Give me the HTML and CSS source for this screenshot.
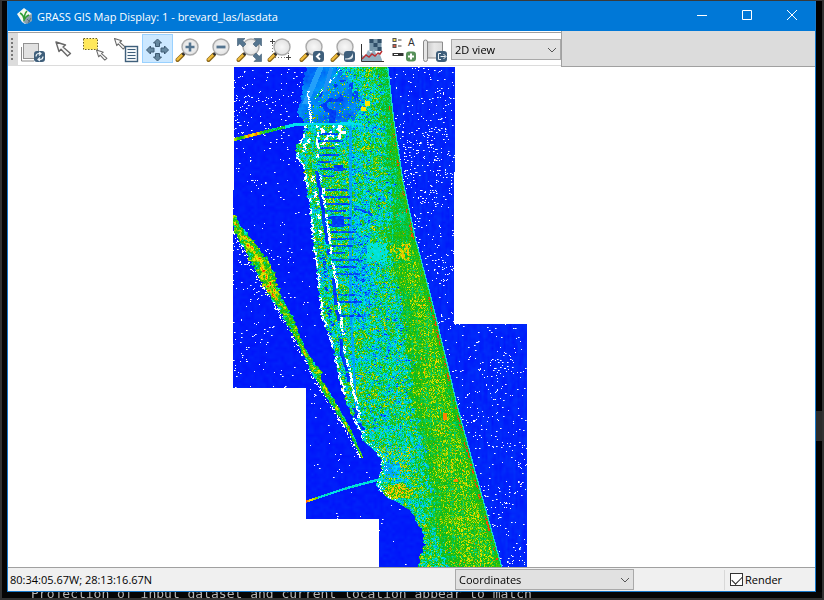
FILE: index.html
```html
<!DOCTYPE html>
<html lang="en">
<head>
<meta charset="utf-8">
<title>GRASS GIS Map Display</title>
<link rel="stylesheet" href="styles.css">
</head>
<body>
<svg class="defs" aria-hidden="true">
  <defs>
    <radialGradient id="glass"><stop offset="0" stop-color="#f8f8f8"/><stop offset="1" stop-color="#e2e2e2"/></radialGradient>
    <linearGradient id="paper"><stop offset="0" stop-color="#c4c4c4"/><stop offset=".5" stop-color="#e8e8e8"/><stop offset="1" stop-color="#dcdcdc"/></linearGradient>
    <g id="lens">
      <path d="M4.500 25 L10 19.500" stroke="#8a6518" stroke-width="4" stroke-linecap="round"/>
      <path d="M4.500 24.500 L10 19" stroke="#f0bd3c" stroke-width="2.400" stroke-linecap="round"/>
      <path d="M9.500 20 L12.500 17" stroke="#333" stroke-width="3"/>
      <circle cx="17" cy="12" r="8" fill="url(#glass)" stroke="#aaa" stroke-width="1.400"/>
    </g>
    <rect id="badge" x="16" y="16" width="11" height="11" rx="3" fill="#3f5f7b"/>
    <path id="pointer" d="M0 0 L9.500 3 L7 5 L14.500 11.500 L11.500 14 L5 7.200 L3 9.500 Z" fill="#fafafa" stroke="#686868" stroke-width="1.400" stroke-linejoin="round"/>
  </defs>
</svg>
<main class="window">
  <header class="titlebar">
    <svg class="logo" width="18" height="18" viewBox="0 0 18 18" aria-hidden="true">
      <path d="M1 7 L8 1 L16 7 L15 13 L9 17 L6 15 Z" fill="#f4f8ef"/>
      <path d="M10 9 L16 7 L16 14 L11 17 L7 15 Z" fill="#8aa0ad"/>
      <path d="M11 12 L14 15 M12 16 L15 11" stroke="#557080"/>
      <path d="M8 14 Q8 8 4 6 M8 14 Q8 7 11 4 M8 13 Q10 9 13 8" fill="none" stroke="#2f9e35" stroke-width="1.500"/>
    </svg>
    <h1>GRASS GIS Map Display: 1 - brevard_las/lasdata</h1>
    <div class="controls">
      <button aria-label="Minimize"><svg width="12" height="12" viewBox="0 0 12 12"><path d="M1 5.500H11"/></svg></button>
      <button aria-label="Maximize"><svg width="12" height="12" viewBox="0 0 12 12"><path d="M1.500 .5H10.500V9.500H1.500Z"/></svg></button>
      <button aria-label="Close"><svg width="12" height="12" viewBox="0 0 12 12"><path d="M1 0L11 10M11 0L1 10"/></svg></button>
    </div>
  </header>
  <div class="toolrow">
    <div class="toolbar" role="toolbar" aria-label="Map tools">
      <span class="grip"></span>
      <button aria-label="Render map"><svg viewBox="0 0 31 28"><path d="M3.500 12V26H16" fill="none" stroke="#8a8a8a"/><rect x="5.500" y="8.500" width="15" height="15" fill="#e1e1e1" stroke="#929292"/><use href="#badge"/><path d="M18 21.500Q18 18.500 21 18.500H22.500M21 17L23 18.500L21 20.500M25 21.500Q25 24.500 22 24.500H20.500M22 22.500L20 24.500L22 26" fill="none" stroke="#e8f0f5" stroke-width="1.200"/></svg></button>
      <button aria-label="Pointer"><svg viewBox="0 0 31 28"><use href="#pointer" x="7" y="7"/></svg></button>
      <button aria-label="Select features"><svg viewBox="0 0 31 28"><rect x="3.500" y="3.500" width="14" height="11" fill="#ffe85a" stroke="#6c6226" stroke-dasharray="1.500 1.500"/><use href="#pointer" transform="translate(16.500 15) scale(.72)"/></svg></button>
      <button aria-label="Query"><svg viewBox="0 0 31 28"><use href="#pointer" transform="translate(3.500 3.500) scale(.75)"/><rect x="14.500" y="11.500" width="12" height="15" fill="#f4f7f9" stroke="#3f5f7b" stroke-width="1.400"/><path d="M16.500 14.500H24.500M16.500 17.500H24.500M16.500 20.500H24.500M16.500 23.500H24.500" stroke="#3f5f7b" stroke-width="1.200"/></svg></button>
      <button class="active" aria-label="Pan"><svg viewBox="0 0 31 28"><g fill="#65879f" stroke="#3e5b73" stroke-linejoin="round"><path d="M15.500 4L19.500 8H17.500V11.500H13.500V8H11.500Z"/><path d="M15.500 26L19.500 22H17.500V18.500H13.500V22H11.500Z"/><path d="M4.500 15L8.500 11V13H12V17H8.500V19Z"/><path d="M26.500 15L22.500 11V13H19V17H22.500V19Z"/></g></svg></button>
      <button aria-label="Zoom in"><svg viewBox="0 0 31 28"><use href="#lens"/><path d="M17 7.500V16.500M12.500 12H21.500" stroke="#54748f" stroke-width="2.600"/></svg></button>
      <button aria-label="Zoom out"><svg viewBox="0 0 31 28"><use href="#lens"/><path d="M12.500 12H21.500" stroke="#54748f" stroke-width="2.800"/></svg></button>
      <button aria-label="Zoom to extent"><svg viewBox="0 0 31 28"><use href="#lens" x="-1"/><g fill="#55758f" stroke="#3e5b73" stroke-width=".6"><path d="M2.500 3.500H10L7.700 5.800L11 9L8 12L4.800 8.700L2.500 11Z"/><path d="M26.500 3.500V11L24.200 8.700L21 12L18 9L21.300 5.800L19 3.500Z"/><path d="M26.500 26.500H19L21.300 24.200L18 21L21 18L24.200 21.300L26.500 19Z"/></g></svg></button>
      <button aria-label="Zoom to region"><svg viewBox="0 0 31 28"><path d="M6.500 10V22.500H19M10 6.500H22.500V19" fill="none" stroke="#777" stroke-dasharray="1 2"/><use href="#lens" x="-1"/><path d="M6.500 4V9M4 6.500H9M22.500 20V25M20 22.500H25" stroke="#444"/></svg></button>
      <button aria-label="Zoom back"><svg viewBox="0 0 31 28"><use href="#lens"/><use href="#badge"/><path d="M23 18.500L20 21.500L23 24.500" fill="none" stroke="#fff" stroke-width="2"/></svg></button>
      <button aria-label="Zoom options"><svg viewBox="0 0 31 28"><use href="#lens"/><use href="#badge"/><path d="M17 23.500Q23.500 23.500 25 18V22Q24.500 25 17 24.500Z" fill="#dfe7ed"/></svg></button>
      <button aria-label="Analyze map"><svg viewBox="0 0 31 28"><rect x="10.500" y="4" width="12" height="12" fill="#7897ab"/><path d="M10.500 4h4v4h-4zM18.500 4h4v4h-4zM14.500 8h4v4h-4zM18.500 12h4v4h-4z" fill="#304f69"/><path d="M3 26V20L6 22L9 15L12 18L15 14L18 21L20 17L23 25V26Z" fill="#91afc0"/><path d="M2.500 9V26.500H25" fill="none" stroke="#333"/><path d="M3 24L7 20L10 22L13 19L16 21L19 18L21 19L23 16" fill="none" stroke="#b92e31" stroke-width="1.400"/></svg></button>
      <button aria-label="Add map elements"><svg viewBox="0 0 31 28"><rect x="3" y="3.500" width="3" height="3" fill="#ffe44c" stroke="#555"/><rect x="3" y="9.500" width="3" height="3" fill="#e25b45" stroke="#555"/><path d="M8 5H11.500M8 11H11.500" stroke="#444"/><text x="18" y="11" class="glyph">A</text><path d="M2.500 19.500H13.500" stroke="#333" stroke-width="3"/><path d="M4 19.500H8" stroke="#fff"/><rect x="16" y="16.500" width="10" height="10" rx="3" fill="#57915a"/><path d="M21 18.500V24.500M18 21.500H24" stroke="#fff" stroke-width="2"/></svg></button>
      <button aria-label="Save display"><svg viewBox="0 0 31 28"><path d="M5 7H21.500V23H5Z" fill="url(#paper)" stroke="#8d8d8d"/><path d="M2.500 7Q2.500 5 4.500 5T6.500 7V24.500Q6.500 26.500 4.500 26.500T2.500 24.500Z" fill="#e5e5e5" stroke="#888"/><use href="#badge" x="-1"/><path d="M20 18.500H17.500V24.500H20M19.500 21.500H24.500M22.500 19L25 21.500L22.500 24" fill="none" stroke="#edf3f7"/></svg></button>
      <span class="combo view"><select aria-label="View mode"><option>2D view</option></select><svg width="10" height="6" viewBox="0 0 10 6"><path d="M1 1L5 5L9 1"/></svg></span>
    </div>
    <div class="dock"></div>
  </div>
  <canvas id="map" class="map" role="img" aria-label="Raster map of lidar elevation"></canvas>
  <footer class="status">
    <output>80:34:05.67W; 28:13:16.67N</output>
    <span class="combo mode"><select aria-label="Status item"><option>Coordinates</option></select><svg width="10" height="6" viewBox="0 0 10 6"><path d="M1 1L5 5L9 1"/></svg></span>
    <label class="render" for="render"><input type="checkbox" id="render" checked>Render</label>
  </footer>
</main>
<aside class="scroll"><span></span></aside>
<p class="terminal">Projection of input dataset and current location appear to match</p>
<script src="map.js"></script>
</body>
</html>
```
FILE: styles.css
```css
* { box-sizing: border-box; }
body {
  margin: 0;
  height: 100vh;
  display: grid;
  grid-template-columns: minmax(0, 1fr) 6px;
  grid-template-rows: minmax(0, 1fr) 6px;
  padding-left: 5px;
  background: #050505;
  border: 2px solid #323232;
  border-top: 1px solid #3a3a3a;
  font-family: "Open Sans", "Noto Sans", sans-serif;
  font-size: 11px;
  color: #000;
  overflow: hidden;
}
.defs { position: absolute; width: 0; height: 0; }
.window {
  display: flex;
  flex-direction: column;
  min-height: 0;
  background: #fff;
  border: 1px solid #1979ca;
  border-top: 0;
}
.titlebar {
  flex: none;
  height: 30px;
  display: flex;
  align-items: center;
  padding: 0 1px 0 8px;
  gap: 3px;
  background: #0078d7;
  color: #fff;
}
.titlebar h1 { flex: 1; margin: 0; font-size: 11px; font-weight: 400; white-space: nowrap; }
.controls { display: flex; }
button { padding: 0; border: 0; background: none; }
.controls button { width: 45px; height: 30px; display: grid; place-items: center; }
.controls path { fill: none; stroke: #fff; }
.toolrow { flex: none; display: flex; height: 36px; }
.toolbar {
  display: flex;
  align-items: flex-start;
  height: 34px;
  margin-top: 1px;
  background: #fff;
  border-top: 1px solid #a0a0a0;
  border-bottom: 1px solid #dcdcdc;
}
.grip { width: 10px; height: 32px; padding: 5px 3px; background: #dcdcdc; }
.grip::before { content: ""; display: block; height: 22px; border-left: 2px dotted #777; }
.toolbar button { width: 31px; height: 29px; margin-top: 1px; border: 1px solid transparent; }
.toolbar button.active { background: #cce8ff; border-color: #99d1ff; }
.toolbar button svg { display: block; width: 31px; height: 28px; margin: -1px; }
.glyph { font-family: "Liberation Sans", sans-serif; font-size: 10px; fill: #333; }
.dock { flex: 1; background: #dcdcdc; border-left: 1px solid #a0a0a0; border-bottom: 1px solid #a0a0a0; }
.combo { position: relative; display: block; }
.combo select {
  appearance: none;
  width: 100%;
  height: 21px;
  padding: 0 3px;
  border: 1px solid #a9a9a9;
  border-radius: 0;
  background: #e1e1e1;
  color: #000;
  font: inherit;
}
.combo svg { position: absolute; right: 4px; top: 8px; }
.combo path { fill: none; stroke: #555; }
.view { width: 110px; margin-top: 6px; margin-left: -1px; }
.map { display: block; flex: 1; width: 100%; min-height: 0; }
.status {
  flex: none;
  display: grid;
  grid-template-columns: 447px 179px 1fr 91px;
  align-items: center;
  height: 24px;
  border-top: 1px solid #a0a0a0;
  background: #f0f0f0;
}
.status output { padding-left: 2px; }
.render {
  grid-column: 4;
  display: flex;
  align-items: center;
  gap: 2px;
  height: 20px;
  padding-left: 5px;
  border-left: 1px solid #d8d8d8;
}
.render input {
  appearance: none;
  width: 13px;
  height: 13px;
  margin: 0;
  border: 1px solid #333;
  background: #fff;
  display: grid;
  place-items: center;
}
.render input:checked::before {
  content: "";
  width: 9px;
  height: 5px;
  border-left: 1px solid #222;
  border-bottom: 1px solid #222;
  transform: translateY(-1px) rotate(-45deg);
}
.scroll { display: flex; flex-direction: column; padding-top: 410px; background: #000; }
.scroll span { height: 30px; background: #2b2b2b; }
.terminal {
  grid-column: 1 / 3;
  display: flex;
  align-items: flex-end;
  height: 6px;
  margin: 0;
  padding-left: 24px;
  overflow: hidden;
  color: #b4b4b4;
  font: 13px/8px "DejaVu Sans Mono", monospace;
  white-space: nowrap;
}
```
FILE: map.js
```js
const canvas = document.getElementById("map");
canvas.width = canvas.clientWidth;
canvas.height = canvas.clientHeight;
const ctx = canvas.getContext("2d");
const X0 = 8, Y0 = 67;

// Repeatable noise in 0..1 for a grid cell.
function rnd(x, y, s) {
  let h = (Math.imul(x | 0, 374761393) + Math.imul(y | 0, 668265263) + Math.imul(s, 974634777)) | 0;
  h = Math.imul(h ^ (h >>> 13), 1274126177);
  h = Math.imul(h ^ (h >>> 15), 2246822519);
  return ((h ^ (h >>> 16)) >>> 0) / 4294967296;
}
// Piecewise linear curve through [position, value] pairs.
function curve(points, p) {
  if (p <= points[0][0]) return points[0][1];
  for (let i = 1; i < points.length; i++) {
    const a = points[i - 1], b = points[i];
    if (p <= b[0]) return a[1] + (b[1] - a[1]) * (p - a[0]) / (b[0] - a[0]);
  }
  return points[points.length - 1][1];
}
function smooth(x, y, size, s) {
  const gx = Math.floor(x / size), gy = Math.floor(y / size);
  const fx = x / size - gx, fy = y / size - gy;
  const a = rnd(gx, gy, s), b = rnd(gx + 1, gy, s), c = rnd(gx, gy + 1, s), d = rnd(gx + 1, gy + 1, s);
  return (a + (b - a) * fx) * (1 - fy) + (c + (d - c) * fx) * fy;
}

const west = [[67,306],[80,303],[95,301],[112,298],[125,304],[138,301],[146,296],[158,297],[164,302],[180,304],[200,308],[240,312],[270,316],[300,319],[320,322],[335,328],[350,333],[375,338],[400,345],[420,354],[440,363],[450,374],[460,381],[470,381],[482,376],[490,379],[498,388],[503,399],[510,409],[520,416],[532,422],[545,424],[556,420],[567,418]];
const east = [[67,388],[120,394],[180,403],[240,416],[266,423],[300,432],[333,440],[370,449],[400,456],[470,475],[567,502]];
const canal = [[115,316],[163,318],[187,322],[220,326],[253,331],[300,338],[350,344],[383,352],[417,359],[430,366]];
const dune = [[67,9],[130,11],[180,14],[240,27],[330,36],[400,44],[480,52],[567,58]];
const spit = [[214,233],[223,235],[240,246],[257,257],[275,266],[290,272],[318,288],[350,303],[370,315],[377,317],[403,333],[428,348],[457,362]];
const spitHalf = [[214,2],[223,4],[240,7],[257,9],[275,8],[290,7],[305,5],[318,5],[335,3],[350,3],[364,3],[370,6],[377,3],[403,3],[428,2],[457,1]];
const ramp = [[0,[0,32,245]],[.15,[0,90,245]],[.3,[0,160,250]],[.43,[0,230,245]],[.54,[0,215,140]],[.64,[10,185,25]],[.74,[70,195,0]],[.83,[185,220,0]],[.9,[250,235,0]],[.96,[255,130,0]],[1,[245,40,0]]];
const white = [255, 255, 255];

function colour(v) {
  return [0, 1, 2].map(i => curve(ramp.map(r => [r[0], r[1][i]]), Math.max(0, Math.min(1, v))));
}
const lut = Array.from({ length: 256 }, (_, i) => colour(i / 255));
const shade = v => lut[Math.max(0, Math.min(255, Math.round(v * 255)))];

function inTiles(x, y) {
  if (y < 324) return x >= (y < 190 ? 234 : 233) && x < (y < 172 ? 455 : 454);
  if (y < 388) return x >= 233 && x < 527;
  if (y < 519) return x >= 306 && x < 527;
  return x >= 379 && x < 527;
}
function water(x, y, E) {
  let p = .005;
  if (x > E) p = y < 320 ? .034 : .024;
  else if (y < 165 && x < 290) p = .05 * (1 - (y - 67) / 150) + smooth(x, y, 12, 3) * .012;
  else if (y > 320 && y < 388 && x < 275) p = .022;
  else if (y < 300 && x < 300) p = .012;
  if (smooth(x, y, 20, 5) > .52) p *= 1.6; else p *= .5;
  if (rnd(x, y, 1) < p) return white;
  if (rnd(x - 1, y, 1) < p * .4) return [150, 165, 255];
  const n = smooth(x, y, 3, 8) * 14 + (x > E ? smooth(x, y / 6, 2, 9) * 18 : 0);
  return [0, 20 + n, 250];
}
function land(x, y, W, E) {
  const d = E - x, w = x - W;
  const n = rnd(x, y, 10), n2 = smooth(x, y, 2, 11), n3 = smooth(x, y, 18, 12);
  const row = smooth(x / 12, y, 1.4, 13), col = smooth(x, y / 14, 1.4, 14);
  const dn = curve(dune, y) + (n3 - .5) * 10 + (n2 - .5) * 12;
  if (d < 1.3) return [20, 215, 210];
  if (d < 4 && y > 105) {
    if (smooth(0, y, 4, 20) > .53 && n > .4 && d > 2) return [240, 70, 10];
    return shade(.6 + n * .16);
  }
  const C = curve(canal, y) + (smooth(5, y, 4, 46) - .5) * 3;
  // Shallow lagoon in the north.
  const lagoonEdge = curve([[67,338],[85,352],[100,362],[112,358],[125,345]], y);
  if (y < 125 && x < lagoonEdge + n2 * 16 - 8) {
    if (y > 90 && Math.abs(x - (308 + (y - 95) * .1)) < 1.4 && n > .45) return white;
    if (y < 104 && Math.abs(x - (320 - (y - 67) * .42)) < 3) return [35, 160, 250];
    if (y < 92 && Math.abs(x - (331 - (y - 67) * .3)) < 2) return [30, 145, 245];
    const shore = 342 - (y - 67) * .9;
    if (x > 313 && Math.abs(x - shore) < 1.6 && n > .3) return n > .75 ? white : shade(.4 + n2 * .3);
    if (x > shore && smooth(x, y, 5, 31) > .68) return shade(.03 + n2 * .1);
    if (x > shore && n > .88) return shade(.4 + n2 * .6);
    return shade(.12 + smooth(x, y, 9, 30) * .17 + n2 * .05);
  }
  if (y > 118 && y < 430) {
    // Seawall and canal along the west bank.
    if (w < 2.5 && smooth(0, y, 5, 40) > .38 && n > .25) return white;
    if (Math.abs(x - C) < 1.3 && smooth(1, y, 5, 41) > .38 && n > .2) return white;
    if (x > C - 4.500 && x < C - 1 && y > 170 && smooth(2, y, 7, 42) > .34) return shade(n2 * .15);
    if (x < C - 5 && w > 7 && w < 10 && smooth(3, y, 6, 43) > .55 && n > .3) return y > 240 ? shade(.05) : white;
    if (x > C && x < C + 28 && y < 320) {
      const strip = Math.floor(y / 7);
      if (y % 7 < 2 && rnd(strip, 0, 44) > .3 && x < C + 12 + rnd(strip, 1, 45) * 18 && n > .12) return shade(.02 + n2 * .18);
    }
    if (y < 145 && x > C + 3 && x < 346 && smooth(x, y, 3, 47) > .62) return white;
  }
  if (y > 215 && y < 227 && x > 331 && x < 344 || y > 164 && y < 171 && x > 333 && x < 343) return shade(.02 + n2 * .08);
  if (y > 420 && y < 500 && w < 5 && n > .78) return white;
  if (y > 125 && y < 430 && Math.abs(x - 350 - Math.max(0, y - 300) * .05) < 1.2) return shade(.25 + n * .12);
  if (Math.abs(Math.hypot(x - 353, (y - 227) * 1.3) - 24) < 1 && x > 353 && y < 216) return shade(.12);
  if (Math.hypot(x - 367, y - 103) < 3 || Math.hypot(x - 363, y - 108) < 3 || Math.abs(y - 124) < 1 && x > 340 && x < 356) return shade(.9);
  if (x > 442 && x < 447 && y > 412 && y < 420 || x > 453 && x < 458 && y > 478 && y < 482) return shade(.96);
  let v;
  if (d < dn) {
    v = .65 + (n - .5) * .1 + (col - .5) * .14 + (row - .5) * .12;
    if (y > 240 && d > 6) v += (n > .66 ? .12 : 0) + (rnd(x, y >> 1, 51) > .82 ? .08 : 0);
    if (d > dn - 14 && n > .8) v -= .16;
  } else {
    const a = Math.min(1, (d - dn) / 38);
    v = .575 - a * .06 + (n3 - .5) * .2 + (n - .5) * .32 + (n2 - .5) * .36 + (row - .5) * .16 + (col - .5) * .14;
    if (y < 430 && rnd(x >> 1, y, 52) > .93) v -= .28;
    if (w < 45 && y > 125 && y < 430) v += .03;
    if (y > 200 && y < 330 && x > 352 && x < 370) v -= .12;
    if (y > 242 && y < 262 && x > 366 && x < 387) v = .42 + n2 * .08;
    if (rnd(x, y, 53) > .93) v += .22;
  }
  if (y > 445 && y < 480 && x < 410) v += n > .7 ? .18 : 0;
  if (y > 463 && y < 478 && x > 383 && x < 400) v = .25 + n2 * .2 + (n > .86 ? .4 : 0);
  if (Math.hypot((x - 397) / 14, (y - 491) / 8) < .8 + n2 * .4) v = .6 + n * .42;
  if (y > 243 && y < 259 && x > 389 && x < 410 && n2 > .55) v += .2;
  if (n > .994) return shade(.97);
  return shade(Math.min(v, .93));
}

const image = ctx.createImageData(canvas.width, canvas.height);
for (let py = 0; py < canvas.height; py++) {
  for (let px = 0; px < canvas.width; px++) {
    const x = px + X0, y = py + Y0;
    let c = white;
    if (inTiles(x, y)) {
      const W = curve(west, y) + (smooth(0, y, 2, 60) - .5) * 3, E = curve(east, y);
      c = x > W && x < E ? land(x, y, W, E) : water(x, y, E);
      if (y > 214 && y < 458) {
        const S = curve(spit, y), H = curve(spitHalf, y), off = x - S + (smooth(x, y, 2, 61) - .5) * H * .7;
        if (Math.abs(off) < H) {
          c = shade(.57 + (1 - Math.abs(off) / H) * .2 + (smooth(x, y, 2, 62) - .5) * .4 + (y > 235 && y < 300 ? .08 : 0) + (rnd(x, y, 63) - .5) * .16);
        } else if (off < -H && off > -H - 3 && rnd(x, y, 64) > .72) c = white;
      }
      const b = curve([[234,139],[262,132],[295,124],[350,123],[362,124]], x);
      if (x < 362 && Math.abs(y - b) < (x < 300 ? 1.6 : 1.2)) c = shade(x < 262 ? .62 + smooth(x, 0, 4, 65) * .5 : x < 285 ? .5 + rnd(x, y, 66) * .22 : .38 + rnd(x, y, 67) * .08);
      const s = curve([[306,501],[318,497],[345,488],[382,478]], x);
      if (x < 382 && Math.abs(y - s) < 1.3) c = shade(x < 318 ? .98 - (x - 306) * .02 : .38 + rnd(x, y, 68) * .15);
    }
    const i = (py * canvas.width + px) * 4;
    image.data[i] = c[0];
    image.data[i + 1] = c[1];
    image.data[i + 2] = c[2];
    image.data[i + 3] = 255;
  }
}
ctx.putImageData(image, 0, 0);
```
